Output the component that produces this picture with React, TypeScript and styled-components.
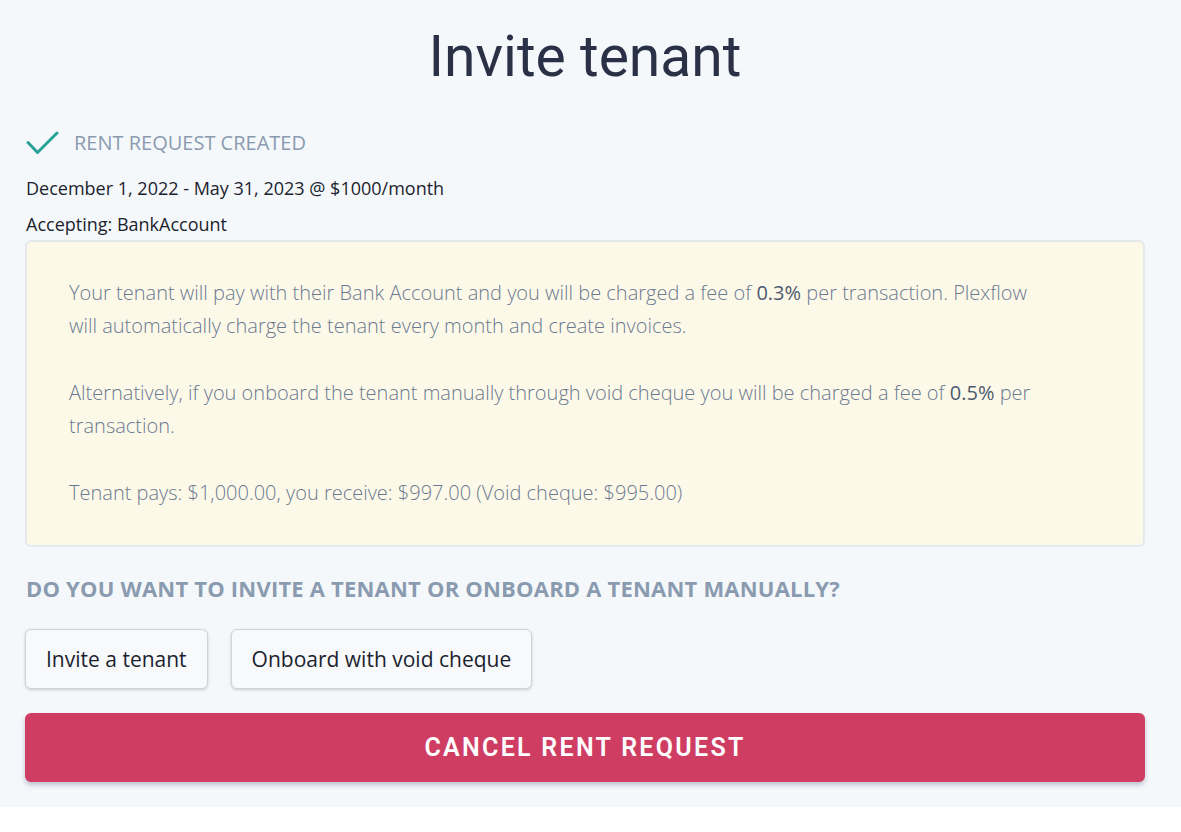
import React from "react";
import styled, { createGlobalStyle } from "styled-components";

const Global = createGlobalStyle`
  html, body { margin: 0; padding: 0; background: #ffffff; }
  body { font-family: "Open Sans", "Noto Sans", sans-serif; }
  * { box-sizing: border-box; }
`;

const Page = styled.div`
  background: #f5f8fb;
  min-height: 807px;
  padding: 21px 36px 24px 25px;
  box-shadow: 0 2px 4px rgba(0, 0, 0, 0.06);
  display: flex;
  flex-direction: column;
`;

const Title = styled.h1`
  margin: 0 0 36px 0;
  text-align: center;
  font-family: Roboto, "Liberation Sans", sans-serif;
  font-weight: 400;
  font-size: 57px;
  line-height: 72px;
  color: #2a3147;
`;

const Status = styled.div`
  display: flex;
  align-items: center;
  gap: 15px;
  margin-left: 1px;
  color: #8a9bb0;
  font-size: 20px;
  line-height: 28px;
  text-transform: uppercase;
`;

const Detail = styled.p<{ $first?: boolean }>`
  margin: ${(p) => (p.$first ? "16px" : "6px")} 0 0 1px;
  font-size: 18px;
  line-height: 30px;
  color: #1c1f2e;
`;

const InfoBox = styled.div`
  margin-top: 1px;
  background: #fdf9e9;
  border: 2px solid #e5e8ee;
  border-radius: 6px;
  padding: 34px 85px 36px 42px;
  color: #6b7a90;
  font-weight: 300;
  font-size: 20px;
  line-height: 33px;
`;

const Para = styled.p`
  margin: 0 0 34px 0;
  &:last-child { margin-bottom: 0; }
  b { font-weight: 400; color: #4d5a6e; }
`;

const Question = styled.h2`
  margin: 26px 0 26px 1px;
  font-size: 22px;
  line-height: 30px;
  font-weight: 700;
  color: #8a9bb0;
  text-transform: uppercase;
  letter-spacing: 0.2px;
`;

const Choices = styled.div`
  display: flex;
  gap: 23px;
`;

const Choice = styled.button`
  height: 60px;
  padding: 0 20px;
  background: #f7f9fb;
  border: 1px solid #cfd3db;
  border-radius: 6px;
  box-shadow: 0 1px 3px rgba(0, 0, 0, 0.18);
  font-family: "Open Sans", "Noto Sans", sans-serif;
  font-size: 21px;
  color: #1c1f2e;
  cursor: pointer;
`;

const CancelButton = styled.button`
  margin-top: 24px;
  height: 69px;
  width: 100%;
  background: #cf3d63;
  border: none;
  border-radius: 6px;
  box-shadow: 0 3px 5px rgba(60, 70, 110, 0.3);
  color: #ffffff;
  font-family: Roboto, "Liberation Sans", sans-serif;
  font-weight: 600;
  font-size: 25px;
  letter-spacing: 2.3px;
  text-transform: uppercase;
  cursor: pointer;
`;

const CheckIcon = () => (
  <svg width="33" height="24" viewBox="0 0 33 24" fill="none">
    <path d="M2 11.5 L11.5 21.5 L31 2" stroke="#2aa198" strokeWidth="3" strokeLinecap="round" strokeLinejoin="round" />
  </svg>
);

export default function App() {
  return (
    <>
      <Global />
      <Page>
        <Title>Invite tenant</Title>
        <Status>
          <CheckIcon />
          <span>Rent request created</span>
        </Status>
        <Detail $first>December 1, 2022 - May 31, 2023 @ $1000/month</Detail>
        <Detail>Accepting: BankAccount</Detail>
        <InfoBox>
          <Para>
            Your tenant will pay with their Bank Account and you will be charged a fee of <b>0.3%</b> per transaction. Plexflow will automatically charge the tenant every month and create invoices.
          </Para>
          <Para>
            Alternatively, if you onboard the tenant manually through void cheque you will be charged a fee of <b>0.5%</b> per transaction.
          </Para>
          <Para>Tenant pays: $1,000.00, you receive: $997.00 (Void cheque: $995.00)</Para>
        </InfoBox>
        <Question>Do you want to invite a tenant or onboard a tenant manually?</Question>
        <Choices>
          <Choice>Invite a tenant</Choice>
          <Choice>Onboard with void cheque</Choice>
        </Choices>
        <CancelButton>Cancel rent request</CancelButton>
      </Page>
    </>
  );
}
